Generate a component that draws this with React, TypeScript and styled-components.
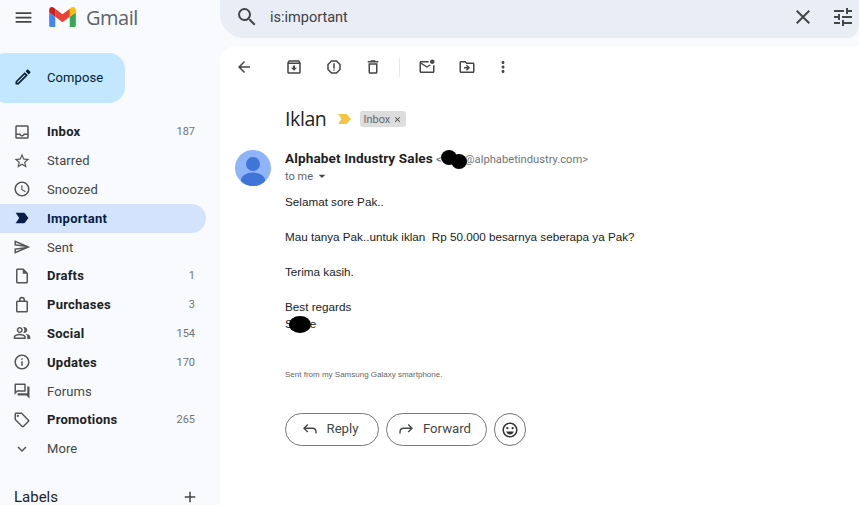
import React from 'react'
import styled, { createGlobalStyle } from 'styled-components'
import {
  MdMenu, MdOutlineEdit, MdOutlineInbox, MdStarBorder, MdOutlineWatchLater, MdLabelImportant,
  MdOutlineSend, MdOutlineInsertDriveFile, MdOutlinePeopleAlt, MdInfoOutline,
  MdOutlineForum, MdOutlineLocalOffer, MdExpandMore, MdAdd, MdSearch, MdClose, MdTune, MdArrowBack,
  MdOutlineReport, MdOutlineDelete, MdOutlineMarkEmailUnread, MdOutlineDriveFileMove, MdMoreVert,
  MdOutlineArchive, MdArrowDropDown, MdOutlineEmojiEmotions
} from 'react-icons/md'

const Global = createGlobalStyle`
  html, body { margin: 0; padding: 0; background: #f8fafd; }
  body { font-family: Roboto, "Liberation Sans", sans-serif; }
`
const Page = styled.div`
  display: grid;
  grid-template-columns: 220px 1fr;
  width: 859px;
  height: 505px;
  overflow: hidden;
  background: #f8fafd;
`
const Sidebar = styled.aside`
  display: flex;
  flex-direction: column;
  min-width: 0;
`
const Brand = styled.div`
  display: flex;
  align-items: center;
  height: 34px;
  padding-left: 13px;
  color: #444746;
`
const Wordmark = styled.span`
  margin-left: 10px;
  font-family: "Open Sans", sans-serif;
  font-size: 20px;
  color: #5f6368;
  letter-spacing: -0.5px;
`
const Logo = styled.svg`
  margin-left: 15px;
  width: 27px;
  height: 20px;
`
const Compose = styled.button`
  display: flex;
  align-items: center;
  width: 135px;
  height: 50px;
  margin: 19px 0 0 -10px;
  padding: 0 0 2px 23px;
  border: 0;
  border-radius: 16px;
  background: #c2e7ff;
  color: #001d35;
  font: 450 13px Roboto, sans-serif;
  letter-spacing: 0.1px;
  gap: 14px;
`
const Nav = styled.nav`
  margin-top: 14.5px;
  width: 206px;
`
const Row = styled.div<{ $active?: boolean; $bold?: boolean }>`
  display: flex;
  align-items: center;
  height: 28.8px;
  padding: 0 11px 0 13px;
  border-radius: 0 15px 15px 0;
  font-size: 13px;
  font-weight: ${p => (p.$bold ? 700 : 400)};
  letter-spacing: ${p => (p.$bold ? 0.25 : 0.1)}px;
  color: ${p => (p.$active ? '#041e49' : p.$bold ? '#202124' : '#444746')};
  background: ${p => (p.$active ? '#d3e3fd' : 'transparent')};
  svg { flex: none; width: 18px; height: 18px; color: ${p => (p.$active ? '#041e49' : '#555')}; }
`
const RowLabel = styled.span`
  flex: 1;
  margin-left: 16px;
`
const Count = styled.span`
  font-size: 11px;
  font-weight: 400;
  letter-spacing: 0;
  color: #70757a;
`
const LabelsHead = styled.div`
  display: flex;
  align-items: center;
  justify-content: space-between;
  width: 185px;
  height: 24px;
  margin: 22px 0 0 14px;
  font-size: 15px;
  color: #1f1f1f;
  svg { width: 18px; height: 18px; color: #444746; }
`
const Main = styled.main`
  display: flex;
  flex-direction: column;
  min-width: 0;
`
const SearchBar = styled.div`
  display: flex;
  align-items: center;
  flex: none;
  height: 38px;
  padding: 0 4px 4px 15px;
  box-sizing: border-box;
  background: #e9eef6;
  border-radius: 0 0 12px 24px;
  color: #444746;
  svg { flex: none; width: 24px; height: 24px; }
`
const SearchText = styled.span`
  flex: 1;
  margin-left: 11px;
  font-size: 14.5px;
  color: #3c4043;
`
const SearchAction = styled.span<{ $gap: number }>`
  display: flex;
  margin-left: ${p => p.$gap}px;
`
const Panel = styled.section`
  flex: 1;
  margin-top: 8px;
  background: #fff;
  border-radius: 16px 0 0 0;
`
const Toolbar = styled.div`
  display: flex;
  align-items: center;
  height: 42px;
  padding-left: 4px;
`
const ToolIcon = styled.span<{ $gap?: number }>`
  display: flex;
  align-items: center;
  justify-content: center;
  width: 40px;
  margin-left: ${p => p.$gap ?? 0}px;
  color: #444746;
  svg { width: 18px; height: 18px; }
`
const Divider = styled.span`
  width: 1px;
  height: 20px;
  margin: 0 7px 0 6px;
  background: #e8eaed;
`
const Subject = styled.div`
  display: flex;
  align-items: center;
  height: 24px;
  margin: 18px 0 0 65px;
`
const SubjectTitle = styled.h2`
  margin: 0;
  font: 400 19.5px "Open Sans", sans-serif;
  color: #1f1f1f;
  letter-spacing: -0.4px;
`
const Chevron = styled.svg`
  width: 13px;
  height: 10px;
  margin: 2px 0 0 12px;
`
const Chip = styled.span`
  display: flex;
  align-items: center;
  height: 16px;
  margin: 2px 0 0 9px;
  padding: 0 4px 0 3px;
  border-radius: 3px;
  background: #dddddd;
  color: #666;
  font-size: 11px;
  svg { width: 9px; height: 9px; margin-left: 3px; color: #444; }
`
const Sender = styled.div`
  display: flex;
  margin: 20px 0 0 15px;
`
const Avatar = styled.svg`
  flex: none;
  width: 36px;
  height: 36px;
`
const SenderInfo = styled.div`
  position: relative;
  margin-left: 14px;
`
const SenderLine = styled.div`
  display: flex;
  align-items: baseline;
  height: 17px;
`
const SenderName = styled.span`
  font-size: 13.6px;
  font-weight: 700;
  color: #1f1f1f;
  letter-spacing: 0.1px;
`
const SenderMail = styled.span`
  margin-left: 3px;
  font-size: 11.2px;
  color: #70757a;
  span { margin-left: 23px; }
`
const ToMe = styled.div`
  display: flex;
  align-items: center;
  height: 18px;
  font-size: 11px;
  color: #5f6368;
  svg { width: 16px; height: 16px; margin-left: 1px; color: #444746; }
`
const Blob = styled.span<{ $x: number; $y: number }>`
  position: absolute;
  left: ${p => p.$x}px;
  top: ${p => p.$y}px;
  width: 16px;
  height: 15px;
  border-radius: 50%;
  background: #000;
`
const Body = styled.div`
  margin: 7px 0 0 65px;
  font: 11.7px/17.6px "Liberation Sans", Arial, sans-serif;
  color: #222;
`
const Para = styled.p<{ $tight?: boolean }>`
  margin: 0 0 ${p => (p.$tight ? 16.6 : 17.6)}px;
`
const Redacted = styled.span`
  display: inline-block;
  width: 22px;
  height: 17px;
  margin: 0 -1px 0 -4px;
  border-radius: 50%;
  background: #000;
  vertical-align: -5px;
`
const Signature = styled.p`
  margin: 36px 0 0;
  font-size: 8px;
  line-height: 12px;
  color: #666;
`
const Actions = styled.div`
  display: flex;
  gap: 7px;
  margin: 32px 0 0 65px;
`
const ActionButton = styled.button<{ $w: number }>`
  display: flex;
  align-items: center;
  justify-content: center;
  width: ${p => p.$w}px;
  height: 33px;
  padding: 0 5px 2px 0;
  gap: 8px;
  border: 1px solid #747775;
  border-radius: 17px;
  background: #fff;
  color: #444746;
  font: 450 13.2px Roboto, sans-serif;
  svg { width: 18px; height: 18px; }
`
const RoundButton = styled(ActionButton)`
  padding: 0;
  svg { color: #333; }
`

const BagIcon = () => (
  <svg viewBox="0 0 24 24" fill="none" stroke="currentColor" strokeWidth="2">
    <path d="M6 7h12a1 1 0 0 1 1 1v12a1 1 0 0 1-1 1H6a1 1 0 0 1-1-1V8a1 1 0 0 1 1-1zM9 7V5a3 3 0 0 1 6 0v2" />
  </svg>
)

const nav = [
  { label: 'Inbox', icon: <MdOutlineInbox />, count: '187', bold: true },
  { label: 'Starred', icon: <MdStarBorder /> },
  { label: 'Snoozed', icon: <MdOutlineWatchLater /> },
  { label: 'Important', icon: <MdLabelImportant />, bold: true, active: true },
  { label: 'Sent', icon: <MdOutlineSend /> },
  { label: 'Drafts', icon: <MdOutlineInsertDriveFile />, count: '1', bold: true },
  { label: 'Purchases', icon: <BagIcon />, count: '3', bold: true },
  { label: 'Social', icon: <MdOutlinePeopleAlt />, count: '154', bold: true },
  { label: 'Updates', icon: <MdInfoOutline />, count: '170', bold: true },
  { label: 'Forums', icon: <MdOutlineForum /> },
  { label: 'Promotions', icon: <MdOutlineLocalOffer />, count: '265', bold: true },
  { label: 'More', icon: <MdExpandMore /> }
]

export default function App() {
  return (
    <Page>
      <Global />
      <Sidebar>
        <Brand>
          <MdMenu size={21} />
          <Logo viewBox="52 42 88 66">
            <path fill="#4285f4" d="M58 108h14V74L52 59v43c0 3.32 2.69 6 6 6" />
            <path fill="#34a853" d="M120 108h14c3.32 0 6-2.69 6-6V59l-20 15" />
            <path fill="#fbbc04" d="M120 48v26l20-15v-8c0-7.42-8.47-11.65-14.4-7.2" />
            <path fill="#ea4335" d="M72 74V48l24 18 24-18v26L96 92" />
            <path fill="#c5221f" d="M52 51v8l20 15V48l-5.6-4.2c-5.94-4.45-14.4-.22-14.4 7.2" />
          </Logo>
          <Wordmark>Gmail</Wordmark>
        </Brand>
        <Compose>
          <MdOutlineEdit size={20} />
          Compose
        </Compose>
        <Nav>
          {nav.map(item => (
            <Row key={item.label} $active={item.active} $bold={item.bold}>
              {item.icon}
              <RowLabel>{item.label}</RowLabel>
              {item.count && <Count>{item.count}</Count>}
            </Row>
          ))}
        </Nav>
        <LabelsHead>
          Labels
          <MdAdd />
        </LabelsHead>
      </Sidebar>
      <Main>
        <SearchBar>
          <MdSearch />
          <SearchText>is:important</SearchText>
          <SearchAction $gap={14}><MdClose /></SearchAction>
          <SearchAction $gap={16}><MdTune /></SearchAction>
        </SearchBar>
        <Panel>
          <Toolbar>
            <ToolIcon><MdArrowBack /></ToolIcon>
            <ToolIcon $gap={10}><MdOutlineArchive /></ToolIcon>
            <ToolIcon><MdOutlineReport /></ToolIcon>
            <ToolIcon $gap={-1}><MdOutlineDelete /></ToolIcon>
            <Divider />
            <ToolIcon><MdOutlineMarkEmailUnread /></ToolIcon>
            <ToolIcon><MdOutlineDriveFileMove /></ToolIcon>
            <ToolIcon $gap={-4}><MdMoreVert /></ToolIcon>
          </Toolbar>
          <Subject>
            <SubjectTitle>Iklan</SubjectTitle>
            <Chevron viewBox="0 0 13 10">
              <path fill="#f6c344" d="M0 0h8.5L13 5l-4.500 5H0l3.500-5z" />
            </Chevron>
            <Chip>Inbox<MdClose /></Chip>
          </Subject>
          <Sender>
            <Avatar viewBox="0 0 36 36">
              <defs>
                <clipPath id="face"><circle cx="18" cy="18" r="18" /></clipPath>
              </defs>
              <circle cx="18" cy="18" r="18" fill="#8fb5f8" />
              <g clipPath="url(#face)" fill="#3f74d8">
                <circle cx="18" cy="14" r="7" />
                <ellipse cx="18" cy="30" rx="12" ry="7.500" />
              </g>
            </Avatar>
            <SenderInfo>
              <SenderLine>
                <SenderName>Alphabet Industry Sales</SenderName>
                <SenderMail>&lt;<span>@alphabetindustry.com&gt;</span></SenderMail>
              </SenderLine>
              <ToMe>to me<MdArrowDropDown /></ToMe>
              <Blob $x={156} $y={0} />
              <Blob $x={166} $y={4} />
            </SenderInfo>
          </Sender>
          <Body>
            <Para>Selamat sore Pak..</Para>
            <Para>Mau tanya Pak..untuk iklan&nbsp; Rp 50.000 besarnya seberapa ya Pak?</Para>
            <Para $tight>Terima kasih.</Para>
            <div>Best regards</div>
            <div>S<Redacted />e</div>
            <Signature>Sent from my Samsung Galaxy smartphone.</Signature>
          </Body>
          <Actions>
            <ActionButton $w={94}>
              <svg viewBox="0 0 24 24" fill="none" stroke="currentColor" strokeWidth="1.800"><path d="M9 6l-5 5 5 5M4 11h11c3 0 5 2 5 5v2" /></svg>
              Reply
            </ActionButton>
            <ActionButton $w={101}>
              <svg viewBox="0 0 24 24" fill="none" stroke="currentColor" strokeWidth="1.800"><path d="M15 6l5 5-5 5M20 11H9c-3 0-5 2-5 5v2" /></svg>
              Forward
            </ActionButton>
            <RoundButton $w={32}>
              <MdOutlineEmojiEmotions />
            </RoundButton>
          </Actions>
        </Panel>
      </Main>
    </Page>
  )
}
